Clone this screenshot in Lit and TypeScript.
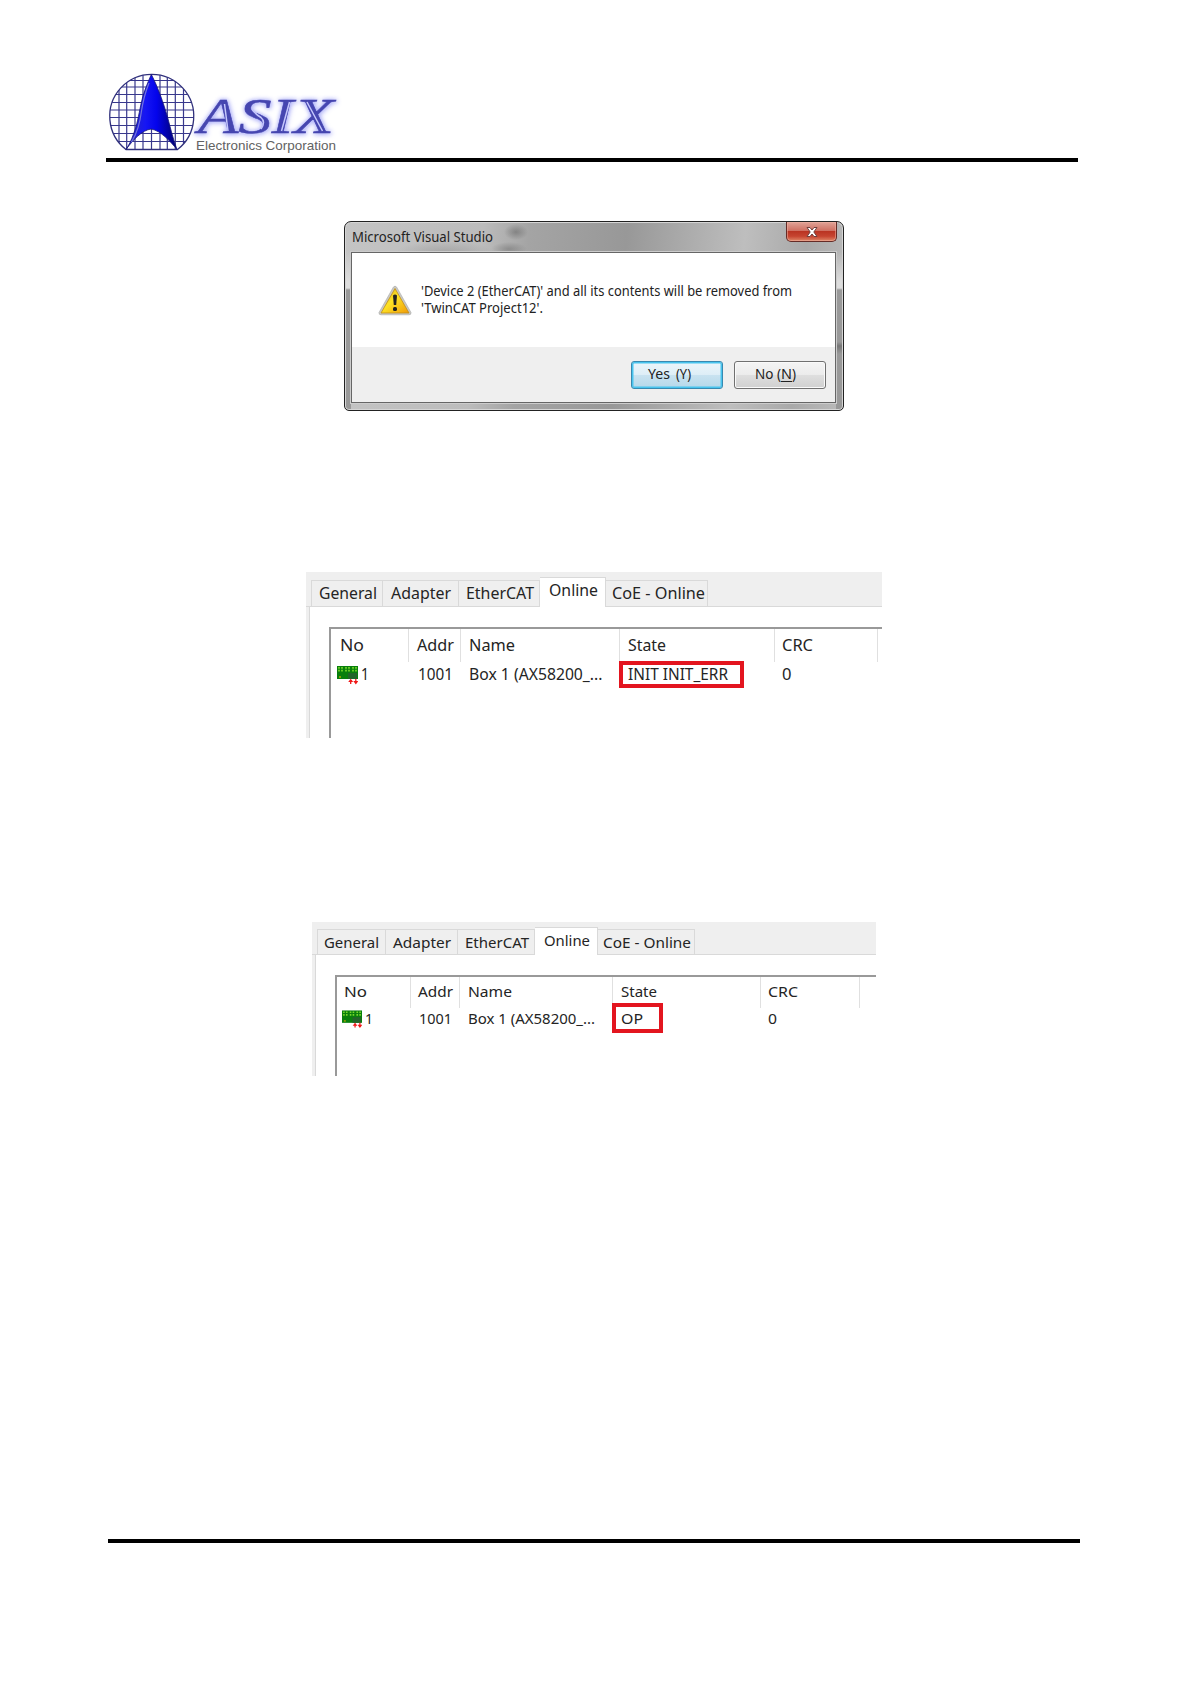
import { LitElement, html, css, svg } from 'lit';
import { customElement, property } from 'lit/decorators.js';

interface Column {
  title: string;
  value: string;
  width: number;
  titleWidth: number;
  valueWidth: number;
  pad: number;
}

interface Tab {
  title: string;
  width: number;
  textWidth: number;
  pad: number;
}

@customElement('fit-label')
export class FitLabel extends LitElement {
  static styles = css`
    :host {
      display: block;
      height: 20px;
    }

    svg {
      display: block;
      height: 20px;
      overflow: visible;
      font-family: 'Noto Sans', 'Open Sans', sans-serif;
    }
  `;

  @property({ type: String })
  text = '';

  @property({ type: Number })
  width = 0;

  @property({ type: Number })
  size = 15;

  // baseline is always 15px below the top of the label
  render() {
    return html`
      <svg width=${this.width} height="20" fill="currentColor">
        <text
          x="0"
          y="15"
          font-size=${this.size}
          textLength=${this.width}
          lengthAdjust="spacingAndGlyphs"
        >${this.text}</text>
      </svg>
    `;
  }
}

@customElement('company-logo')
export class CompanyLogo extends LitElement {
  static styles = css`
    :host {
      display: block;
    }

    svg {
      display: block;
      overflow: visible;
    }

    .name {
      font: italic 50px 'Liberation Serif', serif;
      fill: #4646b0;
      stroke: #4646b0;
      stroke-width: 0.5;
      filter: drop-shadow(0 0 2px #a9acf8) drop-shadow(1px 1px 2px #c4c6fa);
    }

    .inline {
      stroke: #c4c6fc;
      stroke-width: 1.5;
      fill: none;
    }

    .sub {
      font: 12.6px 'Liberation Sans', sans-serif;
      fill: #626262;
    }
  `;

  render() {
    const columns = [9, 16.7, 25, 33, 41.5, 50, 57.3, 65.3, 73.5];
    const rows = [6.5, 13, 20.5, 28.5, 36, 43.5, 51.5, 59.5, 67.5];
    return html`
      <svg width="230" height="84" viewBox="0 0 230 84">
        <defs>
          <clipPath id="disc"><path d="M16 75.5A42 42 0 1 1 67.5 75.5Z" /></clipPath>
          <linearGradient id="arrow" x1="0" x2="1">
            <stop offset="0" stop-color="#2c2cb4" />
            <stop offset="0.38" stop-color="#1616f4" />
            <stop offset="0.6" stop-color="#0404ec" />
            <stop offset="1" stop-color="#00006c" />
          </linearGradient>
        </defs>
        <g clip-path="url(#disc)" stroke="#38388c" stroke-width="1.2">
          ${columns.map((x) => svg`<path d="M${x} 0V76" />`)}
          ${rows.map((y) => svg`<path d="M0 ${y}H84" />`)}
        </g>
        <path d="M16 75.5A42 42 0 1 1 67.5 75.5Z" fill="none" stroke="#30307c" stroke-width="1.3" />
        <path
          d="M41.3 0.5C37 10 33 20 31 30C28.5 42 27 51 23.5 60C21.5 66 19 71 16 75.5C23 66 32 56 41.3 55C51 57 60 67 67 75.5C63 65 60.5 54 57.5 43C53.5 29 47.5 12 41.3 0.5Z"
          fill="url(#arrow)"
          stroke="#181878"
          stroke-width="0.8"
        />
        <path d="M39 9C35 19 33 27 31.5 37C30 49 26 61 21.5 68" fill="none" stroke="#7474dc" stroke-width="1.2" />
        <text class="name" x="88" y="58.5" textLength="136" lengthAdjust="spacingAndGlyphs">ASIX</text>
        <path
          class="inline"
          d="M114.5 30L118 57M142 35Q145 40 151 43.5Q156 48 151 55M179.5 28L171.5 57M197 28L212.5 57"
        />
        <text class="sub" x="86" y="76" textLength="140" lengthAdjust="spacingAndGlyphs">Electronics Corporation</text>
      </svg>
    `;
  }
}

@customElement('message-dialog')
export class MessageDialog extends LitElement {
  static styles = css`
    :host {
      display: block;
      width: 500px;
      color: #222;
    }

    .window {
      box-sizing: border-box;
      height: 190px;
      padding: 0 7px 7px 6px;
      border: 1.5px solid #222;
      border-radius: 7px 7px 5px 5px;
      background:
        radial-gradient(ellipse 12px 8px at 171px 10px, #707070aa, transparent),
        radial-gradient(ellipse 18px 7px at 164px 27px, #77777799, transparent),
        radial-gradient(ellipse 50px 12px at 100px 31px, #88888877, transparent),
        linear-gradient(to bottom, transparent 30px, #ddd 60px, #ddd 66px, #999 68px, #999 100%) left / 6px 100% no-repeat,
        linear-gradient(to bottom, transparent 30px, #ddd 60px, #ddd 66px, #999 68px, #999 120px, #777 124px, #999 132px) right / 7px 100% no-repeat,
        linear-gradient(95deg, #c4c4c4 0, #bcbcbc 27%, #a4a4a4 36%, #989898 55%, #bebebe 78%, #a9a9a9 90%, #bbb 100%);
      box-shadow: inset 0 0 0 1px #d5d5d5;
    }

    .titlebar {
      display: flex;
      justify-content: space-between;
      height: 30px;
    }

    .title {
      padding: 4.5px 0 0 0.5px;
    }

    .close {
      display: grid;
      place-items: center;
      box-sizing: border-box;
      width: 51px;
      height: 20px;
      margin-right: -1px;
      border: 1px solid #652b26;
      border-top: 0;
      border-radius: 0 0 5px 5px;
      background: linear-gradient(#e0a397, #cf7163 45%, #b93322 48%, #c64430 75%, #df8768);
      box-shadow: inset 0 0 0 1px #f0b4a588;
    }

    .client {
      box-sizing: border-box;
      display: grid;
      grid-template-rows: 94px 1fr;
      height: 151px;
      border: 1px solid #666;
      background: #fff;
      box-shadow: 0 0 0 1px #ccc;
    }

    .message {
      display: flex;
      gap: 9.5px;
      padding: 28px 0 0 25.5px;
    }

    .warning {
      display: block;
      margin-top: 4px;
    }

    .line {
      height: 17px;
    }

    .buttons {
      display: flex;
      justify-content: flex-end;
      gap: 11px;
      padding: 14px 9px 0 0;
      background: #efefef;
    }

    .button {
      box-sizing: border-box;
      width: 92px;
      height: 28px;
      padding: 2px 0 0 19.5px;
      border: 1px solid #707070;
      border-radius: 3px;
      background: linear-gradient(#f4f4f4, #ececec 48%, #dedede 52%, #d0d0d0);
      box-shadow: inset 0 0 0 1px #fafafa;
    }

    .button.default {
      padding-left: 16px;
      border-color: #3889b0;
      background: linear-gradient(#ecf5fa, #deeef7 48%, #c8e2f0 52%, #b5d8ea);
      box-shadow: inset 0 0 0 1.5px #48c4ee;
    }

    .key {
      display: flex;
      gap: 6px;
    }

    .key.tight {
      gap: 0;
    }

    .under {
      height: 18px;
      border-bottom: 1px solid #222;
      box-sizing: border-box;
    }
  `;

  render() {
    return html`
      <div class="window">
        <div class="titlebar">
          <fit-label class="title" text="Microsoft Visual Studio" width="141" size="13.8"></fit-label>
          <div class="close">
            <svg width="14" height="12" viewBox="0 0 14 12">
              <path
                d="M2 1.5H5L7 4L9 1.5H12L8.8 6L12 10.5H9L7 8L5 10.5H2L5.2 6Z"
                fill="#fff"
                stroke="#71403d"
                stroke-width="1"
              />
            </svg>
          </div>
        </div>
        <div class="client">
          <div class="message">
            <svg class="warning" width="34" height="31" viewBox="0 0 34 31">
              <defs>
                <linearGradient id="amber" x1="0" y1="0" x2="1" y2="1">
                  <stop offset="0" stop-color="#d8a51c" />
                  <stop offset="0.45" stop-color="#fde325" />
                  <stop offset="1" stop-color="#f09a08" />
                </linearGradient>
              </defs>
              <path
                d="M15.3 2.2Q17 0 18.7 2.2L33 27.5Q33.4 29.8 31 29.8H3Q.6 29.8 1 27.5Z"
                fill="#c9c9c4"
                stroke="#aaa"
                stroke-width="0.6"
              />
              <path d="M17 3.5L31 28H3Z" fill="url(#amber)" stroke="#c08d18" stroke-width="0.8" />
              <path d="M15 10.5Q17 8.7 19 10.5L18.2 20H15.8Z" fill="#222" />
              <rect x="15" y="22" width="4" height="4" rx="1.6" fill="#222" />
            </svg>
            <div>
              <div class="line">
                <fit-label
                  text="'Device 2 (EtherCAT)' and all its contents will be removed from"
                  width="371"
                  size="13.8"
                ></fit-label>
              </div>
              <div class="line">
                <fit-label text="'TwinCAT Project12'." width="122" size="13.8"></fit-label>
              </div>
            </div>
          </div>
          <div class="buttons">
            <div class="button default key">
              <fit-label text="Yes" width="22" size="13.8"></fit-label>
              <fit-label text="(Y)" width="15" size="13.8"></fit-label>
            </div>
            <div class="button key tight">
              <fit-label text="No (" width="26" size="13.8"></fit-label>
              <fit-label class="under" text="N" width="11" size="13.8"></fit-label>
              <fit-label text=")" width="4" size="13.8"></fit-label>
            </div>
          </div>
        </div>
      </div>
    `;
  }
}

@customElement('device-panel')
export class DevicePanel extends LitElement {
  static styles = css`
    :host {
      display: block;
      color: #242424;
    }

    .panel {
      display: flex;
      flex-direction: column;
      height: 100%;
      background: #efefef;
    }

    .tabs {
      display: flex;
      align-items: flex-end;
      box-sizing: border-box;
      flex: none;
      padding-left: 5px;
      box-shadow: inset 0 -1px #d9d9d9;
    }

    .tab {
      box-sizing: border-box;
      flex: none;
      border: 1px solid #d9d9d9;
      border-left: 0;
      padding-top: 2.5px;
    }

    .tab:first-child {
      border-left: 1px solid #d9d9d9;
    }

    .tab.active {
      padding-top: 3px;
      border-bottom: 0;
      background: #fff;
    }

    .body {
      flex: 1;
      margin-left: 3px;
      border-left: 1px solid #d9d9d9;
      background: #fff;
    }

    .list {
      box-sizing: border-box;
      height: 100%;
      border-top: 2px solid #999;
      border-left: 2px solid #999;
    }

    .row {
      display: flex;
    }

    .head {
      box-sizing: border-box;
      border-right: 1px solid #e0e0e0;
      flex: none;
    }

    .cell {
      display: flex;
      flex: none;
      box-sizing: border-box;
    }

    .board {
      display: block;
      margin: 1px 3px 0 -2.5px;
    }

    .marked {
      position: relative;
    }

    .frame {
      position: absolute;
      box-sizing: border-box;
      border: 4px solid #e3151f;
    }
  `;

  @property({ attribute: false })
  tabs: Tab[] = [];

  @property({ attribute: false })
  columns: Column[] = [];

  @property({ attribute: false })
  metrics = { tabs: 35, tab: 27, active: 30, body: '20px 0 0 20px', head: 33, headPad: 6, rowPad: 2, size: 15.5, icon: 21 };

  @property({ attribute: false })
  frame = { left: 0, top: 0, width: 0, height: 0 };

  private board() {
    return html`
      <svg class="board" width=${this.metrics.icon} height="19" viewBox="0 0 21 19">
        <path d="M0 0H21V13H0Z" fill="#087f0c" />
        <path d="M11 7H20V13H11Z" fill="#22642a" />
        <path
          d="M2 1V6M5 1V6M9 1V6M12 1V6M16 1V6M19 1V6"
          stroke="#75d62a"
          stroke-width="1.7"
          stroke-dasharray="1.8 1"
        />
        <path d="M2 11H4" stroke="#b0a800" stroke-width="1.4" />
        <path d="M13.7 18V14M18.8 13V17" stroke="#f01818" stroke-width="1.3" />
        <path d="M11.2 16L13.7 12.8L16.2 16ZM16.3 15L18.8 18.4L21.3 15Z" fill="#f01818" />
      </svg>
    `;
  }

  render() {
    const m = this.metrics;
    return html`
      <div class="panel">
        <div class="tabs" style="height: ${m.tabs}px">
          ${this.tabs.map(
            (tab) => html`
              <div
                class="tab ${tab.title === 'Online' ? 'active' : ''}"
                style="width: ${tab.width}px; height: ${tab.title === 'Online' ? m.active : m.tab}px; padding-left: ${tab.pad}px"
              >
                <fit-label .text=${tab.title} .width=${tab.textWidth} .size=${m.size}></fit-label>
              </div>
            `
          )}
        </div>
        <div class="body" style="padding: ${m.body}">
          <div class="list">
            <div class="row">
              ${this.columns.map(
                (col) => html`
                  <div
                    class="head"
                    style="width: ${col.width}px; height: ${m.head}px; padding: ${m.headPad}px 0 0 ${col.pad}px"
                  >
                    <fit-label .text=${col.title} .width=${col.titleWidth} .size=${m.size}></fit-label>
                  </div>
                `
              )}
            </div>
            <div class="row">
              ${this.columns.map(
                (col, i) => html`
                  <div
                    class="cell ${col.title === 'State' ? 'marked' : ''}"
                    style="width: ${col.width}px; padding: ${m.rowPad}px 0 0 ${col.pad + (col.title === 'Addr' ? 1 : 0)}px"
                  >
                    ${i === 0 ? this.board() : ''}
                    <fit-label .text=${col.value} .width=${col.valueWidth} .size=${m.size}></fit-label>
                    ${col.title === 'State'
                      ? html`<div
                          class="frame"
                          style="left: ${this.frame.left}px; top: ${this.frame.top}px; width: ${this.frame.width}px; height: ${this.frame.height}px"
                        ></div>`
                      : ''}
                  </div>
                `
              )}
            </div>
          </div>
        </div>
      </div>
    `;
  }
}

@customElement('app-root')
export class AppRoot extends LitElement {
  static styles = css`
    :host {
      display: block;
      width: 1191px;
      height: 1684px;
      background: #fff;
      overflow: hidden;
    }

    .page {
      display: flex;
      flex-direction: column;
      height: 100%;
      box-sizing: border-box;
      padding: 74px 0 141px 106px;
    }

    .logo {
      padding-left: 4px;
      height: 84px;
    }

    .rule {
      width: 972px;
      height: 4px;
      background: #000;
    }

    .dialog {
      margin: 59px 0 0 238px;
    }

    .first {
      width: 576px;
      height: 166px;
      margin: 161px 0 0 200px;
    }

    .second {
      width: 564px;
      height: 154px;
      margin: 184px 0 0 206px;
    }

    .bottom {
      margin: auto 0 0 2px;
    }
  `;

  private firstTabs: Tab[] = [
    { title: 'General', width: 72, textWidth: 58, pad: 6.5 },
    { title: 'Adapter', width: 75.5, textWidth: 60, pad: 8 },
    { title: 'EtherCAT', width: 81.5, textWidth: 68, pad: 7 },
    { title: 'Online', width: 66, textWidth: 49, pad: 8.5 },
    { title: 'CoE - Online', width: 102, textWidth: 93, pad: 5.5 },
  ];

  private firstColumns: Column[] = [
    { title: 'No', value: '1', width: 78, titleWidth: 24, valueWidth: 8, pad: 8.5 },
    { title: 'Addr', value: '1001', width: 52, titleWidth: 37, valueWidth: 35, pad: 7.5 },
    { title: 'Name', value: 'Box 1 (AX58200_...', width: 159, titleWidth: 46, valueWidth: 133.5, pad: 7.5 },
    { title: 'State', value: 'INIT INIT_ERR', width: 154.5, titleWidth: 38, valueWidth: 100, pad: 7.5 },
    { title: 'CRC', value: '0', width: 103, titleWidth: 31, valueWidth: 9.5, pad: 7.5 },
  ];

  private secondTabs: Tab[] = [
    { title: 'General', width: 68.5, textWidth: 55, pad: 6 },
    { title: 'Adapter', width: 72, textWidth: 58, pad: 7.5 },
    { title: 'EtherCAT', width: 77.5, textWidth: 64, pad: 7 },
    { title: 'Online', width: 63, textWidth: 46, pad: 8.5 },
    { title: 'CoE - Online', width: 97, textWidth: 88, pad: 5 },
  ];

  private secondColumns: Column[] = [
    { title: 'No', value: '1', width: 73.5, titleWidth: 23, valueWidth: 8, pad: 7 },
    { title: 'Addr', value: '1001', width: 49.5, titleWidth: 35, valueWidth: 33, pad: 7 },
    { title: 'Name', value: 'Box 1 (AX58200_...', width: 153, titleWidth: 44, valueWidth: 127, pad: 7.5 },
    { title: 'State', value: 'OP', width: 148, titleWidth: 36, valueWidth: 22, pad: 7.5 },
    { title: 'CRC', value: '0', width: 98.5, titleWidth: 30, valueWidth: 9, pad: 7 },
  ];

  render() {
    return html`
      <div class="page">
        <company-logo class="logo"></company-logo>
        <div class="rule"></div>
        <message-dialog class="dialog"></message-dialog>
        <device-panel
          class="first"
          .tabs=${this.firstTabs}
          .columns=${this.firstColumns}
          .metrics=${{ tabs: 35, tab: 27, active: 30, body: '20px 0 0 19px', head: 33, headPad: 7, rowPad: 2.5, size: 15.8, icon: 21 }}
          .frame=${{ left: -1.5, top: -1.5, width: 125, height: 27 }}
        ></device-panel>
        <device-panel
          class="second"
          .tabs=${this.secondTabs}
          .columns=${this.secondColumns}
          .metrics=${{ tabs: 33, tab: 26, active: 28, body: '20px 0 0 19px', head: 31, headPad: 5, rowPad: 1, size: 15.2, icon: 20 }}
          .frame=${{ left: -1.5, top: -5, width: 51, height: 30 }}
        ></device-panel>
        <div class="rule bottom"></div>
      </div>
    `;
  }
}
